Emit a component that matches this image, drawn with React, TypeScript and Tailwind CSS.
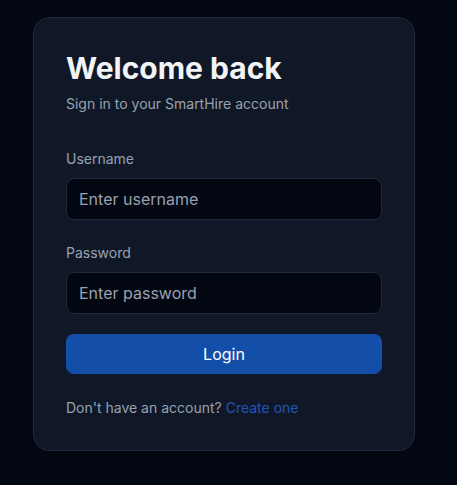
export default function App() {
  return (
    <div className="min-h-screen bg-[#030712] pl-[33px] pt-[17px] pb-[35px] font-['Inter',sans-serif]">
      {/* Card */}
      <div className="w-[382px] rounded-2xl border border-gray-800 bg-gray-900 p-8">
        <h1 className="text-3xl font-bold text-gray-100">Welcome back</h1>
        <p className="mt-2 text-sm text-gray-400">Sign in to your SmartHire account</p>

        <form className="mt-[35px]" onSubmit={(e) => e.preventDefault()}>
          <div>
            <label className="block text-sm text-gray-400">Username</label>
            <input
              type="text"
              placeholder="Enter username"
              className="mt-[9px] block w-full rounded-lg border border-gray-800 bg-[#030712] px-3 py-2 text-base text-gray-100 placeholder-gray-400 outline-none"
            />
          </div>

          <div className="mt-[23px]">
            <label className="block text-sm text-gray-400">Password</label>
            <input
              type="password"
              placeholder="Enter password"
              className="mt-[9px] block w-full rounded-lg border border-gray-800 bg-[#030712] px-3 py-2 text-base text-gray-100 placeholder-gray-400 outline-none"
            />
          </div>

          <button
            type="submit"
            className="mt-5 w-full rounded-lg bg-[#134ea8] py-2 text-base font-normal text-white"
          >
            Login
          </button>
        </form>

        <p className="mt-6 text-sm text-gray-400">
          Don't have an account? <a href="#" className="text-[#1f56b5]">Create one</a>
        </p>
      </div>
    </div>
  );
}
